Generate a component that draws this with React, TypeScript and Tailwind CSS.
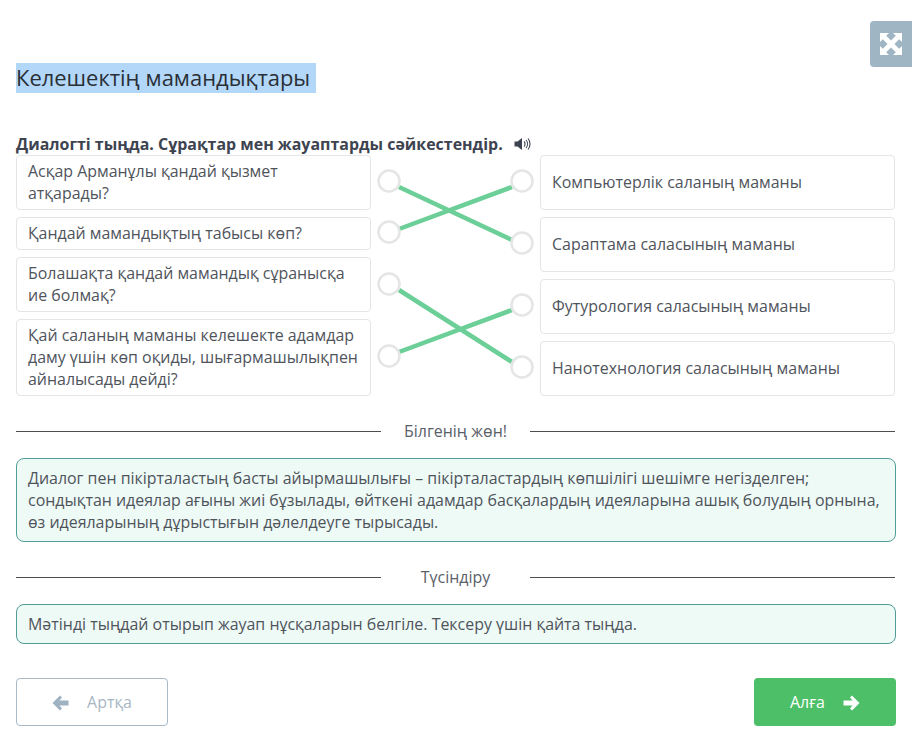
const F = "font-['Open_Sans',sans-serif]";

function Card({ children, className = "" }: { children: React.ReactNode; className?: string }) {
  return (
    <div className={`flex items-center rounded border border-[#e3e5e8] bg-white pb-[2px] pl-[11px] pr-[8px] text-[15.95px] leading-[22px] text-[#4f545c] ${className}`}>
      {children}
    </div>
  );
}

function Divider({ label }: { label: string }) {
  return (
    <div className="flex items-center pr-px">
      <div className="h-px w-[365px] bg-[#4b4f52]" />
      <div className="w-[149px] text-center text-[15.95px] leading-[22px] text-[#5a6068]">{label}</div>
      <div className="h-px flex-1 bg-[#4b4f52]" />
    </div>
  );
}

function Links() {
  const left = [181, 232, 284, 356];
  const right = [181, 243, 305, 367];
  return (
    <svg width="169" height="241" viewBox="0 155 169 241" className="shrink-0">
      <g transform="translate(-371 0)" fill="none">
        <g stroke="#6ccf97" strokeWidth="4.5">
          <line x1="399" y1="187" x2="512" y2="240" />
          <line x1="399" y1="229" x2="512" y2="187" />
          <line x1="399" y1="290" x2="512" y2="362" />
          <line x1="399" y1="352" x2="512" y2="310" />
        </g>
        <g stroke="#e4e5e5" strokeWidth="2.5" fill="#fff">
          {left.map((y) => <circle key={y} cx="389" cy={y} r="10.5" />)}
          {right.map((y) => <circle key={y} cx="522" cy={y} r="10.5" />)}
        </g>
      </g>
    </svg>
  );
}

export default function App() {
  return (
    <div className={`relative h-[741px] w-[912px] overflow-hidden bg-white pl-4 pr-4 ${F}`}>
      <button className="absolute left-[870px] top-[21px] flex h-[46px] w-[42px] items-center justify-center rounded-l bg-[#a0b5c3]">
        <svg width="24" height="24" viewBox="0 0 24 24" fill="#fff">
          <path d="M1 1h9L7.2 3.8 12 8.6l4.8-4.8L14 1h9v9l-2.8-2.8L15.4 12l4.8 4.8L23 14v9h-9l2.8-2.8L12 15.4l-4.8 4.8L10 23H1v-9l2.8 2.8L8.6 12 3.8 7.2 1 10z" />
        </svg>
      </button>

      <div className="pt-[63px]">
        <h1 className="w-[300px] bg-[#b3d7f8] text-[21.95px] font-normal leading-[30px] text-[#2a2f36]">Келешектің мамандықтары</h1>
      </div>

      <div className="mt-[40px] flex h-[22px] items-center text-[15.95px] font-bold leading-[22px] text-[#3d4350]">
        <span>Диалогті тыңда. Сұрақтар мен жауаптарды сәйкестендір.</span>
        <svg className="ml-[11px]" width="17" height="14" viewBox="0 0 17 14" fill="none">
          <path d="M0.5 4.5H3.5L8 1V13L3.5 9.5H0.5Z" fill="#3d4350" />
          <path d="M10 4.5a3.5 3.5 0 0 1 0 5M12 3a6 6 0 0 1 0 8M14 1.5a8.5 8.5 0 0 1 0 11" stroke="#3d4350" strokeWidth="1.1" />
        </svg>
      </div>

      <div className="flex pr-px">
        <div className="flex w-[355px] shrink-0 flex-col gap-[7px]">
          <Card className="h-[55px]">Асқар Арманұлы қандай қызмет атқарады?</Card>
          <Card className="h-[33px]">Қандай мамандықтың табысы көп?</Card>
          <Card className="h-[55px]">Болашақта қандай мамандық сұранысқа ие болмақ?</Card>
          <Card className="h-[77px]">Қай саланың маманы келешекте адамдар даму үшін көп оқиды, шығармашылықпен айналысады дейді?</Card>
        </div>
        <Links />
        <div className="flex flex-1 flex-col gap-[7px]">
          <Card className="h-[55px]">Компьютерлік саланың маманы</Card>
          <Card className="h-[55px]">Сараптама саласының маманы</Card>
          <Card className="h-[55px]">Футурология саласының маманы</Card>
          <Card className="h-[55px]">Нанотехнология саласының маманы</Card>
        </div>
      </div>

      <div className="mt-6"><Divider label="Білгенің жөн!" /></div>

      <div className="mt-[16px] rounded-lg border border-[#4f9d96] bg-[#eefaf6] px-[11px] py-[8px] text-[15.95px] leading-[22px] text-[#4f545c]">
        Диалог пен пікірталастың басты айырмашылығы – пікірталастардың көпшілігі шешімге негізделген; сондықтан идеялар ағыны жиі бұзылады, өйткені адамдар басқалардың идеяларына ашық болудың орнына, өз идеяларының дұрыстығын дәлелдеуге тырысады.
      </div>

      <div className="mt-6"><Divider label="Түсіндіру" /></div>

      <div className="mt-[16px] rounded-lg border border-[#4f9d96] bg-[#eefaf6] px-[11px] py-[8px] text-[15.95px] leading-[22px] text-[#4f545c]">
        Мәтінді тыңдай отырып жауап нұсқаларын белгіле. Тексеру үшін қайта тыңда.
      </div>

      <div className="mt-[34px] flex justify-between">
        <button className="flex h-[48px] w-[152px] items-center justify-center gap-[18px] rounded border border-[#a9b9c6] bg-white pt-px text-[15.95px] text-[#a7b6c3]">
          <svg width="17" height="16" viewBox="0 0 17 16" fill="#9fb2c1"><path d="M0.5 8L8 0.5L10 2.5L7.5 5.5H16.5V10.5H7.5L10 13.5L8 15.5Z" /></svg>
          Артқа
        </button>
        <button className="flex h-[48px] w-[142px] items-center justify-center gap-[18px] rounded bg-[#4dbf69] pt-px text-[15.95px] text-white">
          Алға
          <svg width="17" height="16" viewBox="0 0 17 16" fill="#fff"><path d="M16.5 8L9 0.5L7 2.5L9.5 5.5H0.5V10.5H9.5L7 13.5L9 15.5Z" /></svg>
        </button>
      </div>
    </div>
  );
}
